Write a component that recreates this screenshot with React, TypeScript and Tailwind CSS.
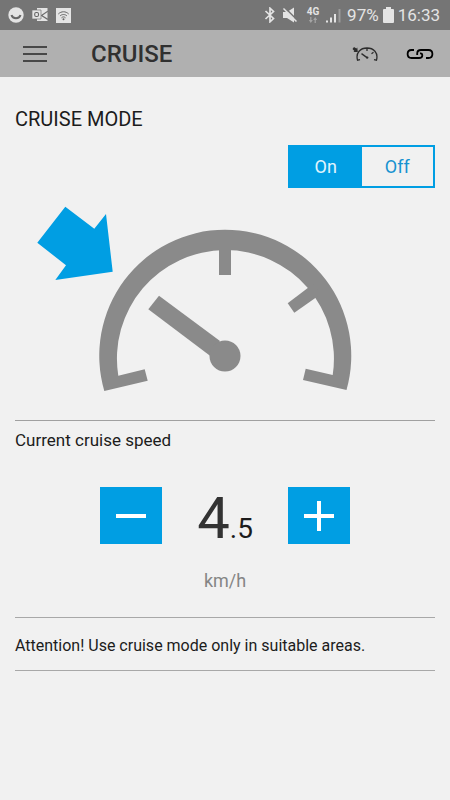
import { useState } from "react";

const StatusBar = () => (
  <div className="flex h-[30px] items-center justify-between bg-[#757575] pr-[10px] pl-2 text-[#e4e4e4]">
    <div className="flex items-center gap-2">
      {/* Smiley */}
      <svg className="h-4 w-4" viewBox="0 0 16 16">
        <circle cx="8" cy="8" r="7.7" fill="currentColor" />
        <path d="M3.5 8c1.2 4.2 7.8 4.2 9 0" fill="none" stroke="#666" strokeWidth="2" />
      </svg>
      {/* Mail */}
      <svg className="h-4 w-4" viewBox="0 0 16 16">
        <path d="M5 1h10.5v13H5z" fill="currentColor" />
        <path d="M15.8 4.2 9.5 8.4l6.3 4" fill="none" stroke="#6c6c6c" strokeWidth="1.2" />
        <path d="M0 3h9v9H0z" fill="currentColor" stroke="#757575" strokeWidth="0.7" />
        <rect x="2.7" y="5.5" width="3.8" height="4" rx="1.4" fill="none" stroke="#666" strokeWidth="1.1" />
      </svg>
      {/* Wifi */}
      <svg className="h-[15px] w-[15px]" viewBox="0 0 15 15">
        <path d="M0 0h15v15H0z" fill="currentColor" />
        <path
          d="M2.3 6c3-3 7.4-3 10.4 0M4 8c2-2 5-2 7 0M5.5 9.8c1.2-1.2 2.8-1.2 4 0"
          fill="none"
          stroke="#666"
        />
        <circle cx="7.5" cy="11.3" r="1" fill="#666" />
      </svg>
    </div>

    <div className="flex items-center">
      <svg className="mr-1.5 h-4 w-3" viewBox="0 0 12 16" fill="none" stroke="currentColor" strokeWidth="1.7">
        <path d="m1.5 4 8 7.5L6 14.8V1.2l3.5 3.3-8 7.5" />
      </svg>
      <svg className="mr-2 h-4 w-4" viewBox="0 0 16 16">
        <path d="M1 5h4l7-4.5v15L5 11H1z" fill="currentColor" />
        <path d="m2.5.5 13 13" stroke="#757575" strokeWidth="1.6" />
        <path d="m1.5 1.5 13 13" stroke="currentColor" strokeWidth="1.5" />
      </svg>
      <div className="mr-1.5 flex w-[14px] flex-col items-center">
        <span className="text-[10px] leading-[10px] font-bold">4G</span>
        <svg className="h-[6px] w-2" viewBox="0 0 8 6" fill="#a5a5a5">
          <path d="M1.2 0h1.2v3h1.4L1.8 6-.2 3h1.4zM5.6 6h1.2V3h1.4L6.2 0l-2 3h1.4z" />
        </svg>
      </div>
      <svg className="mr-1.5 h-[15px] w-[15px]" viewBox="0 0 15 15" fill="currentColor">
        <path d="M0 12.5h2v2H0zM4 9.5h2v5H4zM8 6h2v8.5H8z" />
        <path d="M12.5 1h2v13.5h-2z" fill="#9b9b9b" />
      </svg>
      <span className="text-[17px] leading-5">97%</span>
      <svg className="mx-1 h-4 w-[11px]" viewBox="0 0 11 16" fill="currentColor">
        <path d="M3 0h5v2h2q1 0 1 1v12q0 1-1 1H1q-1 0-1-1V3q0-1 1-1h2z" />
      </svg>
      <span className="text-[17px] leading-5">16:33</span>
    </div>
  </div>
);

const Header = () => (
  <header className="flex h-[47px] items-center bg-[#b0b0b0] pr-4 pl-[23px]">
    <button aria-label="Menu" className="text-[#484848]">
      <svg className="h-4 w-6" viewBox="0 0 24 16" fill="currentColor">
        <path d="M0 0h24v2H0zM0 7h24v2H0zM0 14h24v2H0z" />
      </svg>
    </button>
    <h1 className="ml-11 flex-1 text-2xl font-medium text-[#303030]">CRUISE</h1>
    <button aria-label="Cruise mode" className="text-[#2d2d2d]">
      <svg className="h-4 w-[26px]" viewBox="0 0 26 16" fill="none" stroke="currentColor">
        <path
          d="m8 13.6-2.5.6C3.500 6.500 8.500 2 15 2s11.500 4.500 9.500 12.200L22 13.600M15 2v3M21.500 6.300l-2 1.500M9.500 7.600l5.500 4"
          strokeWidth="1.3"
        />
        <circle cx="15.2" cy="11.6" r="1.2" fill="currentColor" stroke="none" />
        <path d="m2 1 2.4 1.500.900-.9.500 4.300-4.300.2.900-1L.5 3z" fill="currentColor" stroke="none" />
      </svg>
    </button>
    <button aria-label="Connection" className="ml-7 text-black">
      <svg className="h-3 w-7" viewBox="0 0 28 12" fill="none" stroke="currentColor" strokeWidth="1.8">
        <path d="M8 2H5.500Q1.600 2 1.600 6t3.900 4H13q3.300 0 3.300-2.500T14 5.500" />
        <path d="M20 10h2.500q3.900 0 3.900-4t-3.900-4H15q-3.800 0-3.800 3.500V7" />
      </svg>
    </button>
  </header>
);

const Gauge = () => (
  <svg className="mt-3 block w-full" viewBox="0 0 420 200" role="img" aria-label="Cruise gauge">
    <path
      d="M50.3 6.7 79.3 28.7 91 14l6.7 57.7L40.3 80 51 65.3 22.3 42.7z"
      fill="#009ee3"
    />
    <g fill="#8a8a8a">
      <path d="M89.3 191A126 126 0 1 1 331.5 190L288 180l2.7-11.3 27 6.3A108.5 108.5 0 1 0 103.3 175.7l26.4-6.4 3 11.4z" />
      <path d="M204 44h12v31h-12z" />
      <path d="M272.7 103.3 298 84l8 10-26.700 18.700z" />
      <path d="M144 95.7 205 141 195 155.700l-61.700-46.400z" />
      <circle cx="210" cy="156" r="15.5" />
    </g>
  </svg>
);

const stepButton = "flex h-[57px] w-[62px] items-center justify-center bg-[#009ee3] text-white";

const App = () => {
  const [cruise, setCruise] = useState(true);
  // speed is kept in tenths of km/h
  const [speed, setSpeed] = useState(45);

  return (
    <div className="min-h-screen bg-[#f1f1f1] font-['Roboto',sans-serif] text-[#1c1c1c]">
      <StatusBar />
      <Header />

      <main className="px-[15px] pt-7">
        <h2 className="text-xl leading-7">CRUISE MODE</h2>

        <div className="mt-3 ml-auto flex h-[43px] w-[147px] border-2 border-[#009ee3] text-lg">
          <button
            onClick={() => setCruise(true)}
            aria-pressed={cruise}
            className={cruise ? "flex-1 bg-[#009ee3] text-[#e2f5fd]" : "flex-1 text-[#1692d0]"}
          >
            On
          </button>
          <button
            onClick={() => setCruise(false)}
            aria-pressed={!cruise}
            className={cruise ? "flex-1 text-[#1692d0]" : "flex-1 bg-[#009ee3] text-[#e2f5fd]"}
          >
            Off
          </button>
        </div>

        <Gauge />

        <section className="mt-5 border-t border-[#a0a0a0] pt-[7px]">
          <h3 className="text-[17px] leading-6">Current cruise speed</h3>
          <div className="mt-[35px] flex items-center justify-center">
            <button
              aria-label="Decrease speed"
              onClick={() => setSpeed(Math.max(0, speed - 5))}
              className={stepButton}
            >
              <svg className="h-8 w-8" viewBox="0 0 32 32" fill="currentColor">
                <path d="M1 14h30v4H1z" />
              </svg>
            </button>
            <p className="h-[57px] w-[126px] text-center text-[58px] leading-[62px] text-[#333]">
              {Math.floor(speed / 10)}
              <span className="text-[28px] leading-none text-[#1c1c1c]">.{speed % 10}</span>
            </p>
            <button
              aria-label="Increase speed"
              onClick={() => setSpeed(speed + 5)}
              className={stepButton}
            >
              <svg className="h-8 w-8" viewBox="0 0 32 32" fill="currentColor">
                <path d="M1 14h13V1h4v13h13v4H18v13h-4V18H1z" />
              </svg>
            </button>
          </div>
          <p className="mt-[25px] text-center text-lg leading-6 text-[#858585]">km/h</p>
        </section>

        <p className="mt-6 border-y border-[#a8a8a8] pt-4 pb-3 text-base leading-6">
          Attention! Use cruise mode only in suitable areas.
        </p>
      </main>
    </div>
  );
};

export default App;
